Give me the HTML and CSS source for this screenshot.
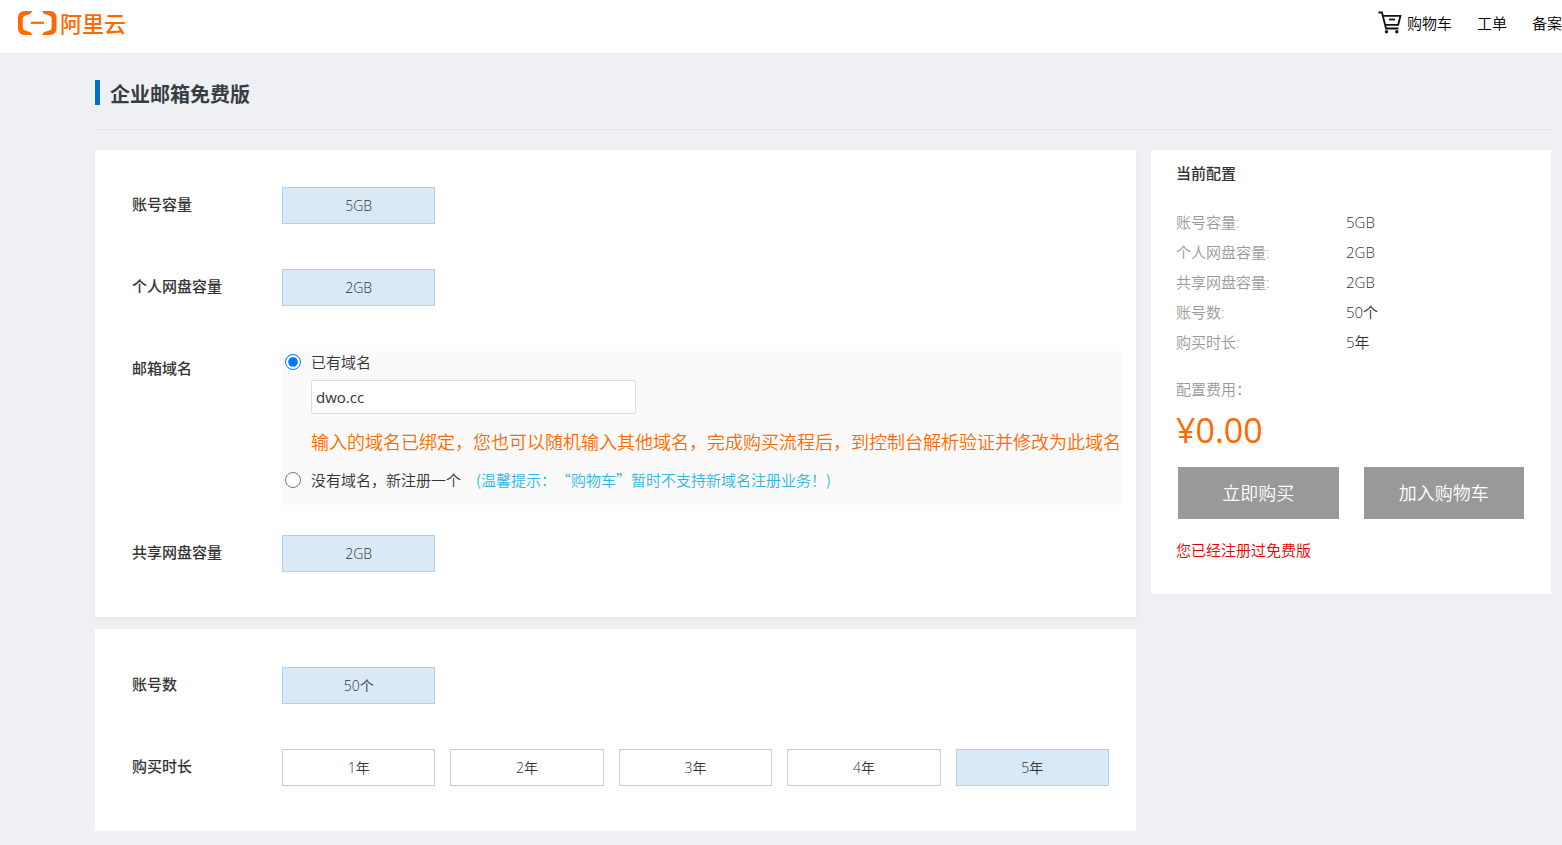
FILE: index.html
```html
<!DOCTYPE html>
<html lang="zh-CN">
<head>
<meta charset="utf-8">
<meta name="viewport" content="width=device-width, initial-scale=1">
<title>企业邮箱免费版</title>
<link rel="stylesheet" href="styles.css">
</head>
<body>
<header class="topbar">
  <a class="logo" href="#">
    <svg class="logo-mark" viewBox="0 0 39 24" aria-hidden="true">
      <path d="M14.500 0H7Q0 0 0 7V17Q0 24 7 24H14.500L12.500 21.300L7.200 19.600Q4.800 18.800 4.800 16.500V7.500Q4.800 5.200 7.200 4.400L12.500 2.700Z"/>
      <path d="M24 0H31.500Q38.500 0 38.500 7V17Q38.500 24 31.500 24H24L26 21.300L31.300 19.600Q33.700 18.800 33.700 16.500V7.500Q33.700 5.200 31.300 4.400L26 2.700Z"/>
      <path d="M13 10.700H26V12.900H13Z"/>
    </svg>
    <span class="logo-text">阿里云</span>
  </a>
  <nav class="nav">
    <a class="nav-link" href="#">
      <svg class="cart" viewBox="0 0 24 24" aria-hidden="true">
        <path d="M0.500 1.500H4L8 17.500H20.500" />
        <path d="M5.200 4.800H22.500L20.200 13.800H7.200" />
        <path d="M11 8.500H17" />
        <circle cx="8.500" cy="20.700" r="1.700"/>
        <circle cx="18.800" cy="20.700" r="1.700"/>
      </svg>
      <span>购物车</span>
    </a>
    <a class="nav-link" href="#">工单</a>
    <a class="nav-link" href="#">备案</a>
  </nav>
</header>
<main class="page">
  <div class="page-head"><h1 class="page-title">企业邮箱免费版</h1></div>
  <div class="columns">
    <form class="config">
      <section class="card card-raised">
        <div class="row">
          <span class="row-label">账号容量</span>
          <div class="options"><button type="button" class="option selected">5GB</button></div>
        </div>
        <div class="row">
          <span class="row-label">个人网盘容量</span>
          <div class="options"><button type="button" class="option selected">2GB</button></div>
        </div>
        <div class="row row-domain">
          <span class="row-label">邮箱域名</span>
          <div class="domain">
            <label class="choice"><input class="radio" type="radio" name="domain" checked><span>已有域名</span></label>
            <div class="domain-detail">
              <input class="domain-input" type="text" value="dwo.cc" aria-label="已有域名">
              <p class="warning">输入的域名已绑定，您也可以随机输入其他域名，完成购买流程后，到控制台解析验证并修改为此域名</p>
            </div>
            <label class="choice"><input class="radio" type="radio" name="domain"><span>没有域名，新注册一个</span><span class="hint">(温馨提示：“购物车”暂时不支持新域名注册业务！)</span></label>
          </div>
        </div>
        <div class="row">
          <span class="row-label">共享网盘容量</span>
          <div class="options"><button type="button" class="option selected">2GB</button></div>
        </div>
      </section>
      <section class="card">
        <div class="row">
          <span class="row-label">账号数</span>
          <div class="options"><button type="button" class="option selected">50个</button></div>
        </div>
        <div class="row">
          <span class="row-label">购买时长</span>
          <div class="options">
            <button type="button" class="option">1年</button>
            <button type="button" class="option">2年</button>
            <button type="button" class="option">3年</button>
            <button type="button" class="option">4年</button>
            <button type="button" class="option selected">5年</button>
          </div>
        </div>
      </section>
    </form>
    <aside class="summary">
      <h2 class="summary-title">当前配置</h2>
      <dl class="summary-list">
        <dt>账号容量:</dt><dd>5GB</dd>
        <dt>个人网盘容量:</dt><dd>2GB</dd>
        <dt>共享网盘容量:</dt><dd>2GB</dd>
        <dt>账号数:</dt><dd>50个</dd>
        <dt>购买时长:</dt><dd>5年</dd>
      </dl>
      <p class="fee-label">配置费用：</p>
      <p class="price">¥0.00</p>
      <div class="actions">
        <button type="button" class="action">立即购买</button>
        <button type="button" class="action">加入购物车</button>
      </div>
      <p class="error">您已经注册过免费版</p>
    </aside>
  </div>
</main>
</body>
</html>
```
FILE: styles.css
```css
* {
  box-sizing: border-box;
}

body,
h1,
h2,
p,
dl,
dd {
  margin: 0;
}

body {
  background: #eff0f4;
  color: #333;
  font-family: "Open Sans", "Noto Sans CJK SC", sans-serif;
  font-size: 15px;
  font-weight: 350;
  line-height: 22px;
  text-spacing-trim: space-all;
}

button,
input {
  font: inherit;
  color: inherit;
}

.topbar {
  display: flex;
  justify-content: space-between;
  height: 54px;
  padding-left: 18px;
  background: #fff;
  border-bottom: 1px solid #e6e8eb;
}

.logo {
  display: flex;
  align-items: center;
  gap: 3px;
  height: 46px;
  color: #ff6a00;
  text-decoration: none;
}

.logo-mark {
  width: 39px;
  height: 24px;
  fill: currentColor;
}

.logo-text {
  font-size: 22px;
  font-weight: 500;
}

.nav {
  display: flex;
  gap: 25px;
  height: 46px;
}

.nav-link {
  display: flex;
  align-items: center;
  gap: 5px;
  color: #000;
  text-decoration: none;
}

.cart {
  width: 24px;
  height: 24px;
  fill: none;
  stroke: #111;
  stroke-width: 1.8;
}

.cart circle {
  fill: #111;
  stroke: none;
}

.page {
  padding: 26px 11px 14px 95px;
}

.page-head {
  padding-bottom: 24px;
  border-bottom: 1px solid #e3e4e8;
}

.page-title {
  padding: 5px 0 0 10px;
  border-left: 5px solid #0070cc;
  color: #373d41;
  font-size: 20px;
  font-weight: 700;
  line-height: 20px;
}

.columns {
  display: flex;
  align-items: flex-start;
  gap: 15px;
  margin-top: 20px;
}

.config {
  display: flex;
  flex: 1;
  flex-direction: column;
  gap: 12px;
}

.card {
  display: flex;
  flex-direction: column;
  gap: 45px;
  padding: 38px 13px 45px 37px;
  background: #fff;
}

.card-raised {
  padding-top: 37px;
  box-shadow: 0 2px 8px rgba(0, 20, 0, 0.05);
}

.row {
  display: grid;
  grid-template-columns: 150px 1fr;
}

.row-domain {
  margin-bottom: -15px;
}

.row-label {
  color: #333;
  font-weight: 500;
  line-height: 35px;
}

.options {
  display: grid;
  grid-template-columns: repeat(5, 1fr);
  gap: 15px;
  margin-right: 14px;
}

.option {
  height: 37px;
  padding: 0;
  background: #fff;
  border: 1px solid #ccc;
  font-size: 14px;
}

.option.selected {
  background: #d9eaf6;
  border-color: #add2ee;
}

.domain {
  padding-bottom: 14px;
  background: #fafafa;
}

.choice {
  display: flex;
  align-items: center;
}

.radio {
  width: 16px;
  height: 16px;
  margin: 0 10px 0 3px;
}

.hint {
  margin-left: 15px;
  color: #2db7e0;
  font-family: "Noto Sans CJK SC", sans-serif;
}

.domain-detail {
  padding: 7px 0 13px 29px;
}

.domain-input {
  display: block;
  width: 325px;
  height: 34px;
  padding: 0 4px;
  background: #fff;
  border: 1px solid #ddd;
  border-radius: 2px;
  font-weight: 400;
}

.warning {
  margin-top: 14px;
  color: #ff6a00;
  font-size: 18px;
  line-height: 28px;
}

.summary {
  width: 400px;
  padding: 8px 25px 29px;
  background: #fff;
}

.summary-title {
  font-size: 15px;
  font-weight: 500;
  line-height: 30px;
}

.summary-list {
  display: grid;
  grid-template-columns: 170px 1fr;
  margin-top: 19px;
  line-height: 30px;
}

.summary-list dt,
.fee-label {
  color: #999;
}

.fee-label {
  margin-top: 17px;
  line-height: 30px;
}

.price {
  color: #ff6a00;
  font-size: 34px;
  font-weight: 400;
  line-height: 52px;
}

.actions {
  display: grid;
  grid-template-columns: 1fr 1fr;
  gap: 25px;
  margin: 11px 2px 0;
}

.action {
  height: 52px;
  padding: 0;
  background: #999;
  border: 0;
  color: #fff;
  font-size: 18px;
}

.error {
  margin-top: 16px;
  color: #e60000;
  line-height: 30px;
}
```
